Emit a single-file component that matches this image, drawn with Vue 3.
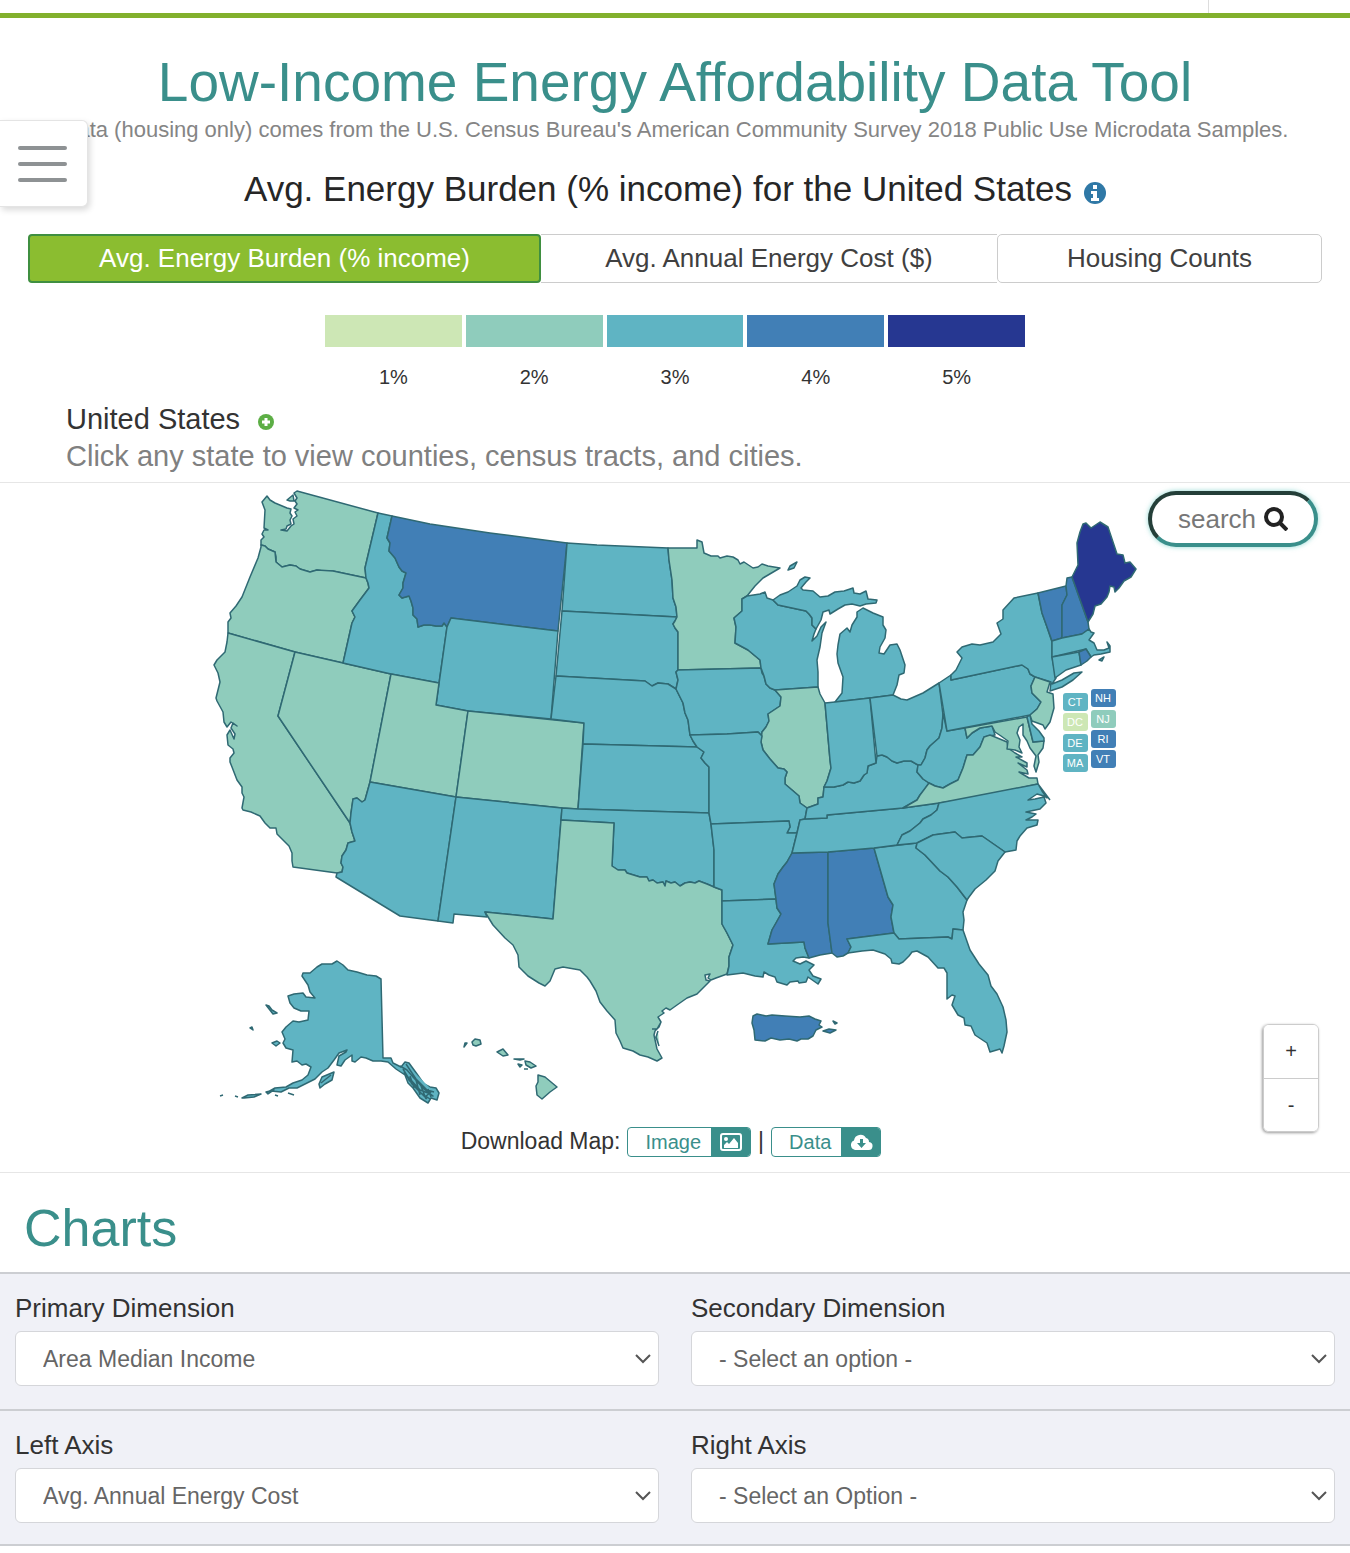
<template>
  <div class="page">
    <header class="topbar">
      <div class="topbar-cell"></div>
    </header>

    <button class="menu-toggle" type="button" aria-label="Open menu">
      <span></span>
      <span></span>
      <span></span>
    </button>

    <main>
      <h1 class="title">Low-Income Energy Affordability Data Tool</h1>
      <p class="source">
        Data (housing only) comes from the U.S. Census Bureau's American Community Survey 2018 Public Use Microdata Samples.
      </p>

      <h2 class="subtitle">
        <span>Avg. Energy Burden (% income) for the United States</span>
        <svg class="info" viewBox="0 0 22 22" aria-hidden="true">
          <circle cx="11" cy="11" r="11" fill="#2f78a6" />
          <path d="M9 3h4v4H9zM7 9h6v7h2v3H7v-3h2v-4H7z" fill="#fff" />
        </svg>
      </h2>

      <div class="tabs">
        <button
          v-for="tab in tabs"
          :key="tab"
          type="button"
          class="tab"
          :class="{ active: tab === activeTab }"
          @click="activeTab = tab"
        >{{ tab }}</button>
      </div>

      <ul class="legend">
        <li v-for="n in 5" :key="n">
          <span class="swatch" :class="'bg' + n"></span>
          {{ n }}%
        </li>
      </ul>

      <div class="place">
        <div class="place-name">
          <span>United States</span>
          <svg class="plus" viewBox="0 0 16 16" aria-hidden="true">
            <circle cx="8" cy="8" r="8" fill="#5cae45" />
            <path d="M8 4v8M4 8h8" stroke="#fff" stroke-width="3" />
          </svg>
        </div>
        <div class="hint">Click any state to view counties, census tracts, and cities.</div>
      </div>

      <section class="map-area">
        <svg class="map" viewBox="0 483 1350 634" role="img" aria-label="Map of the United States">
          <path
            v-for="s in states"
            :key="s.id"
            class="state"
            :class="'lv' + s.level"
            :d="s.d"
          />
          <g v-for="c in chips" :key="c.id">
            <rect :class="'lv' + c.level" :x="c.x" :y="c.y" width="25" height="18" rx="3" />
            <text class="chip-text" :x="c.x + 12" :y="c.y + 13">{{ c.id }}</text>
          </g>
        </svg>

        <button class="search" type="button">
          <span>search</span>
          <svg viewBox="0 0 24 24" aria-hidden="true">
            <circle cx="10" cy="10" r="8" />
            <path d="M16 16l7 7" />
          </svg>
        </button>

        <div class="zoom">
          <button type="button">+</button>
          <button type="button">-</button>
        </div>

        <div class="download">
          <span>Download Map:</span>
          <button class="dl" type="button">
            <span class="dl-label">Image</span>
            <span class="dl-icon">
              <svg viewBox="0 0 24 20" aria-hidden="true">
                <rect x="2" y="2" width="20" height="16" rx="2" fill="none" stroke="#fff" stroke-width="2" />
                <circle cx="7" cy="7" r="2" fill="#fff" />
                <path d="M5 16v-3l3-3 2 2 5-6 4 5v5z" fill="#fff" />
              </svg>
            </span>
          </button>
          <span class="bar">|</span>
          <button class="dl" type="button">
            <span class="dl-label">Data</span>
            <span class="dl-icon">
              <svg viewBox="0 0 24 20" aria-hidden="true">
                <path d="M6 18a5 5 0 0 1-1-9.500A6.500 6.500 0 0 1 17 6a4 4 0 0 1 3 4 4 4 0 0 1-1 8z" fill="#fff" />
                <path d="M11 7h3v4h3l-4.500 5L8 11h3z" fill="#3a8f8b" />
              </svg>
            </span>
          </button>
        </div>
      </section>

      <h2 class="charts-title">Charts</h2>

      <form class="controls">
        <div v-for="(row, i) in rows" :key="i" class="row">
          <div v-for="f in row" :key="f.id" class="field">
            <label :for="f.id">{{ f.label }}</label>
            <div class="select-wrap">
              <select :id="f.id">
                <option>{{ f.value }}</option>
              </select>
              <svg viewBox="0 0 16 10" aria-hidden="true">
                <path d="M1 1l7 7 7-7" />
              </svg>
            </div>
          </div>
        </div>
      </form>
    </main>
  </div>
</template>

<script setup>
import { ref } from 'vue'

const tabs = ['Avg. Energy Burden (% income)', 'Avg. Annual Energy Cost ($)', 'Housing Counts']
const activeTab = ref(tabs[0])

const rows = [
  [
    { id: 'primary', label: 'Primary Dimension', value: 'Area Median Income' },
    { id: 'secondary', label: 'Secondary Dimension', value: '- Select an option -' }
  ],
  [
    { id: 'left', label: 'Left Axis', value: 'Avg. Annual Energy Cost' },
    { id: 'right', label: 'Right Axis', value: '- Select an Option -' }
  ]
]

const chips = [
  { id: 'CT', level: 3, x: 1063, y: 693 },
  { id: 'DC', level: 1, x: 1063, y: 713 },
  { id: 'DE', level: 3, x: 1063, y: 734 },
  { id: 'MA', level: 3, x: 1063, y: 754 },
  { id: 'NH', level: 4, x: 1091, y: 689 },
  { id: 'NJ', level: 2, x: 1091, y: 710 },
  { id: 'RI', level: 4, x: 1091, y: 730 },
  { id: 'VT', level: 4, x: 1091, y: 750 }
]

const states = [
  { id: 'WA', level: 2, d: 'M297 491L378 513 365 568 366 578 333 571 323 571 317 570 310 572 300 569 296 566 290 565 282 567 276 562 276 557 275 552 268 549 265 546 261 545 261 540 264 537 262 534 264 530 268 530 264 528 265 510 262 502 267 496 270 500 275 503 287 508 291 509 290 513 292 516 290 520 291 524 287 526 286 529 281 530 287 531 291 526 294 524 293 519 297 516 295 512 298 510 294 508 297 504 295 501 297 498 294 493ZM287 500L293 495 294 501 290 501Z' },
  { id: 'OR', level: 2, d: 'M261 545L265 546 268 549 275 552 276 562 282 567 290 565 296 566 300 569 310 572 317 570 333 571 366 578 368 583 369 588 360 600 352 611 355 617 352 623 343 663 295 652 228 633 228 622 231 618 230 613 236 606 242 597 250 577 258 558 261 547Z' },
  { id: 'CA', level: 2, d: 'M228 633L295 652 278 716 350 823 352 832 355 841 348 843 346 850 342 856 341 863 343 867 342 872 337 873 293 867 292 861 292 853 289 846 281 838 277 834 276 828 270 828 265 823 260 816 251 812 243 810 242 808 244 797 242 793 242 787 237 780 232 767 230 762 230 758 234 753 233 749 228 745 227 735 230 730 234 739 235 734 231 728 233 723 237 726 231 722 227 727 224 722 223 712 217 701 216 698 220 682 218 673 214 665 217 660 225 652 227 642Z' },
  { id: 'NV', level: 2, d: 'M295 652L343 663 391 674 370 782 365 800 362 802 357 798 353 799 351 813 350 823 278 716Z' },
  { id: 'ID', level: 3, d: 'M378 513L392 516 387 538 390 543 389 551 395 558 399 567 402 571 406 573 403 583 403 588 399 595 402 598 409 596 411 601 413 608 413 615 417 619 418 627 424 625 430 625 436 626 442 626 444 623 447 627 439 683 391 674 343 663 352 623 355 617 352 611 360 600 369 588 368 583 366 578 365 568Z' },
  { id: 'MT', level: 4, d: 'M392 516L430 524 490 533 567 543 558 631 451 618 447 627 444 623 442 626 436 626 430 625 424 625 418 627 417 619 413 615 413 608 411 601 409 596 402 598 399 595 403 588 403 583 406 573 402 571 399 567 395 558 389 551 390 543 387 538Z' },
  { id: 'WY', level: 3, d: 'M451 618L558 631 551 719 468 711 436 705 447 627Z' },
  { id: 'UT', level: 2, d: 'M391 674L439 683 436 705 468 711 456 797 370 782Z' },
  { id: 'CO', level: 2, d: 'M468 711L584 723 578 809 562 808 456 797Z' },
  { id: 'AZ', level: 3, d: 'M370 782L456 797 438 921 400 916 336 877 337 873 342 872 343 867 341 863 342 856 346 850 348 843 355 841 352 832 350 823 351 813 353 799 357 798 362 802 365 800Z' },
  { id: 'NM', level: 3, d: 'M456 797L562 808 553 919 485 912 487 917 454 914 453 923 438 921Z' },
  { id: 'ND', level: 3, d: 'M567 543L597 545 668 548 669 560 672 580 673 598 676 607 677 617 562 611Z' },
  { id: 'SD', level: 3, d: 'M562 611L677 617 675 621 673 624 675 628 678 632 678 670 676 672 678 680 676 689 668 684 658 683 652 686 645 681 556 676Z' },
  { id: 'NE', level: 3, d: 'M556 676L645 681 652 686 658 683 668 684 676 689 680 697 683 703 685 713 688 720 690 735 693 741 697 747 583 744 584 723 551 719Z' },
  { id: 'KS', level: 3, d: 'M583 744L697 747 704 752 701 758 705 763 709 767 709 813 578 809Z' },
  { id: 'OK', level: 3, d: 'M562 808L578 809 709 813 711 824 714 850 714 887 707 884 699 881 695 883 690 882 685 883 680 886 675 882 671 883 666 881 665 886 663 882 657 883 653 880 649 881 647 877 640 877 627 873 625 870 618 870 612 866 614 823 561 820Z' },
  { id: 'TX', level: 2, d: 'M561 820L614 823 612 866 618 870 625 870 627 873 640 877 647 877 649 881 653 880 657 883 663 882 665 886 666 881 671 883 675 882 680 886 685 883 690 882 695 883 699 881 707 884 714 887 722 890 722 924 727 933 730 939 733 945 729 957 729 966 727 974 716 978 711 980 708 978 710 974 705 975 706 980 710 981 705 986 697 994 687 998 677 1005 670 1010 666 1008 662 1011 664 1013 658 1017 661 1022 659 1027 655 1031 654 1035 657 1049 662 1058 657 1061 648 1057 640 1055 633 1051 623 1048 620 1041 616 1033 615 1020 607 1011 600 1002 596 991 590 981 587 977 580 970 563 967 555 969 550 981 545 986 539 983 528 976 519 967 518 955 513 945 505 938 493 925 485 912 553 919ZM661 1022L657 1029 652 1029M658 1031L656 1037 659 1046' },
  { id: 'MN', level: 2, d: 'M668 548L697 548 697 540 702 542 704 553 711 556 718 556 720 558 727 556 733 557 738 560 740 564 744 562 753 568 758 567 762 564 768 566 780 568 763 578 755 586 747 596 742 599 742 611 734 618 736 627 735 643 748 650 760 660 761 668 678 670 678 632 675 628 673 624 675 621 677 617 676 607 673 598 672 580 669 560Z' },
  { id: 'IA', level: 3, d: 'M678 670L761 668 762 673 764 676 766 684 770 688 775 690 781 697 780 706 768 714 769 721 766 727 762 732 762 736 758 732 727 734 690 735 688 720 685 713 683 703 680 697 676 689 678 680 676 672Z' },
  { id: 'WI', level: 3, d: 'M742 599L747 596 760 594 765 592 767 598 773 600 778 605 792 608 806 611 809 614 812 618 812 625 816 629 814 634 812 641 817 636 821 627 826 622 822 633 820 647 817 660 818 672 818 687 775 690 770 688 766 684 764 676 761 668 760 660 748 650 735 643 736 627 734 618 742 611Z' },
  { id: 'MI', level: 3, d: 'M773 600L780 595 788 592 797 586 800 580 805 577 810 578 806 582 801 588 803 590 813 591 820 597 828 596 835 592 844 591 853 588 854 593 860 594 866 591 868 599 877 600 876 603 866 604 860 606 852 604 845 605 838 609 830 614 829 610 823 612 821 620 816 629 812 625 812 618 809 614 806 611 792 608 778 605ZM857 612L857 617 852 625 850 632 847 628 840 634 838 645 837 654 838 663 843 677 842 693 835 702 870 698 893 695 897 685 899 675 904 673 905 665 900 650 897 644 890 645 884 654 879 653 880 647 885 638 886 630 883 625 883 617 873 613 863 608ZM788 570L790 566 797 562 794 568Z' },
  { id: 'IL', level: 2, d: 'M775 690L818 687 820 694 825 703 830 760 831 768 827 781 824 787 823 797 818 798 818 804 807 808 800 803 799 796 785 784 785 778 787 772 784 769 778 768 770 759 763 750 761 742 762 732 766 727 769 721 768 714 780 706 781 697Z' },
  { id: 'MO', level: 3, d: 'M690 735L727 734 758 732 762 736 761 742 763 750 770 759 778 768 784 769 787 772 785 778 785 784 799 796 800 803 807 808 805 819 800 820 797 833 787 833 790 827 789 821 711 824 709 813 709 767 705 763 701 758 704 752 697 747 693 741Z' },
  { id: 'AR', level: 3, d: 'M711 824L789 821 790 827 787 833 797 833 792 853 787 862 783 867 778 874 774 884 776 899 722 901 722 890 714 887 714 850Z' },
  { id: 'LA', level: 3, d: 'M722 901L776 899 777 908 781 914 776 923 772 930 768 944 804 942 805 948 809 958 803 957 796 958 793 961 800 964 806 961 814 965 809 970 813 976 821 979 818 984 808 977 806 982 799 983 798 981 790 982 787 985 777 982 775 977 769 975 764 972 763 977 755 976 743 973 727 975 729 966 729 957 733 945 730 939 727 933 722 924Z' },
  { id: 'MS', level: 4, d: 'M792 853L828 852 828 923 832 953 820 955 809 958 805 948 804 942 768 944 772 930 776 923 781 914 777 908 776 899 774 884 778 874 783 867 787 862Z' },
  { id: 'AL', level: 4, d: 'M828 852L874 848 888 897 893 905 891 917 894 933 847 939 851 947 848 953 843 956 837 957 832 953 828 923Z' },
  { id: 'GA', level: 3, d: 'M874 848L917 843 916 848 925 855 940 871 948 877 957 887 967 900 963 912 964 920 963 930 953 929 952 939 948 937 899 939 894 933 891 917 893 905 888 897Z' },
  { id: 'FL', level: 3, d: 'M847 939L894 933 899 939 948 937 952 939 953 929 963 930 970 950 979 964 988 975 991 986 997 994 1003 1007 1006 1020 1007 1032 1004 1046 1002 1053 1000 1049 990 1052 987 1043 975 1035 971 1026 965 1025 964 1018 958 1015 952 1005 955 996 952 995 947 999 947 973 944 968 938 968 928 957 917 951 912 952 909 956 903 962 899 964 892 963 891 959 885 954 873 950 862 951 848 953 851 947Z' },
  { id: 'TN', level: 3, d: 'M805 819L827 818 827 815 903 808 939 803 937 810 931 815 923 819 920 823 910 831 902 835 900 839 897 845 874 848 828 852 792 853 797 833 800 820Z' },
  { id: 'KY', level: 3, d: 'M807 808L818 804 818 798 823 797 824 787 834 787 843 785 848 782 854 783 860 781 864 775 867 773 868 766 876 763 877 756 882 755 887 757 892 761 897 763 904 761 911 761 918 765 917 772 923 779 929 783 925 789 920 795 917 800 903 808 827 815 827 818 805 819Z' },
  { id: 'IN', level: 3, d: 'M825 703L835 702 870 698 876 763 868 766 867 773 864 775 860 781 854 783 848 782 843 785 834 787 824 787 827 781 831 768 830 760Z' },
  { id: 'OH', level: 3, d: 'M870 698L893 695 901 699 907 700 923 693 939 683 943 715 942 728 939 738 930 746 927 750 925 758 921 765 918 765 911 761 904 761 897 763 892 761 887 757 882 755 877 756Z' },
  { id: 'WV', level: 3, d: 'M943 713L947 731 965 728 967 738 972 733 980 728 992 726 995 735 984 737 980 747 973 755 967 755 963 768 958 780 950 784 943 788 935 786 929 783 923 779 917 772 918 765 921 765 925 758 927 750 930 746 939 738 942 728Z' },
  { id: 'VA', level: 2, d: 'M903 808L917 800 920 795 929 783 935 786 943 788 950 784 958 780 963 768 967 755 973 755 980 747 984 737 990 735 995 737 1007 742 1008 748 1015 753 1022 757 1016 757 1027 763 1027 767 1018 763 1027 770 1028 774 1019 772 1029 778 1037 778 1038 784 967 799 939 803Z' },
  { id: 'MD', level: 2, d: 'M965 728L1027 717 1033 742 1044 741 1043 748 1038 755 1039 762 1036 772 1034 766 1036 756 1030 748 1027 741 1023 735 1023 724 1019 727 1017 733 1020 740 1019 747 1022 753 1015 750 1007 749 1008 741 1001 736 995 732 992 726 980 728 972 733 967 738Z' },
  { id: 'DE', level: 3, d: 'M1027 717L1030 715 1032 724 1039 731 1044 738 1044 741 1033 742Z' },
  { id: 'NC', level: 3, d: 'M939 803L1038 784 1042 791 1047 798 1044 796 1037 794 1028 800 1035 799 1044 797 1046 803 1040 809 1026 812 1036 814 1032 817 1026 820 1038 820 1037 825 1027 828 1020 836 1017 841 1016 850 1005 852 982 836 962 838 955 832 933 835 917 843 897 845 900 839 902 835 910 831 920 823 923 819 931 815 937 810ZM1038 784L1050 800' },
  { id: 'SC', level: 3, d: 'M917 843L933 835 955 832 962 838 982 836 1005 852 998 861 995 871 986 880 975 889 969 897 967 900 957 887 948 877 940 871 925 855 916 848Z' },
  { id: 'PA', level: 3, d: 'M939 683L951 675 951 680 1022 665 1028 669 1030 674 1035 677 1031 686 1032 693 1041 702 1037 709 1030 715 947 731Z' },
  { id: 'NY', level: 3, d: 'M951 680L951 675 956 670 962 658 957 652 962 647 972 644 980 645 993 642 1001 634 997 623 1003 619 1003 610 1014 598 1038 593 1042 613 1047 627 1052 642 1052 657 1056 678 1052 684 1062 680 1074 673 1082 672 1073 680 1062 687 1050 691 1051 682 1035 677 1030 674 1028 669 1022 665Z' },
  { id: 'NJ', level: 2, d: 'M1035 677L1050 682 1047 692 1053 694 1054 708 1050 722 1045 729 1043 725 1032 721 1030 715 1037 709 1041 702 1032 693 1031 686Z' },
  { id: 'VT', level: 4, d: 'M1038 593L1066 586 1067 595 1062 605 1062 638 1052 641 1047 627 1042 613Z' },
  { id: 'NH', level: 4, d: 'M1066 586L1067 578 1072 577 1088 622 1089 629 1082 634 1062 638 1062 605 1067 595Z' },
  { id: 'ME', level: 5, d: 'M1072 577L1078 565 1077 543 1080 532 1083 524 1086 523 1091 528 1100 522 1108 527 1117 554 1123 555 1125 563 1130 562 1136 569 1131 577 1124 581 1119 588 1115 592 1114 587 1110 586 1109 592 1107 597 1101 604 1095 606 1093 614 1088 622Z' },
  { id: 'MA', level: 3, d: 'M1052 641L1062 638 1082 634 1089 629 1091 632 1094 633 1089 640 1094 643 1097 650 1104 650 1109 648 1107 642 1110 646 1110 652 1101 654 1094 655 1091 657 1086 649 1052 657ZM1099 660L1104 657 1102 661Z' },
  { id: 'CT', level: 3, d: 'M1052 657L1079 652 1081 665 1066 670 1055 678Z' },
  { id: 'RI', level: 4, d: 'M1079 652L1086 649 1091 657 1087 661 1081 665Z' },
  { id: 'PR', level: 4, d: 'M753 1016L757 1014 766 1016 772 1015 785 1016 800 1017 809 1016 815 1019 821 1021 819 1025 822 1027 816 1030 813 1036 808 1039 801 1039 797 1041 789 1039 780 1040 771 1038 765 1041 755 1040 754 1030 752 1023ZM823 1031L829 1029 836 1030 830 1033ZM833 1021L837 1023 835 1024Z' },
  { id: 'AK', level: 3, d: 'M337 961L343 965 348 970 357 972 367 975 376 976 381 979 383 1058 391 1058 393 1063 401 1067 405 1062 409 1063 417 1074 424 1084 430 1087 436 1088 439 1093 437 1100 431 1098 428 1103 420 1098 413 1088 408 1083 405 1075 396 1069 388 1062 381 1061 373 1061 366 1058 361 1057 355 1062 352 1061 352 1055 345 1060 341 1066 337 1065 339 1056 346 1052 347 1050 339 1053 334 1060 328 1068 322 1072 315 1079 307 1083 297 1088 289 1088 281 1092 271 1091 268 1092 275 1088 286 1087 293 1083 302 1080 308 1075 311 1067 306 1064 302 1065 297 1061 292 1062 293 1050 286 1048 283 1043 285 1039 282 1032 286 1027 293 1021 299 1022 308 1020 309 1011 301 1011 294 1008 290 1003 288 996 294 994 303 993 306 997 315 998 310 992 308 985 302 976 303 973 310 973 317 967 322 964 332 964ZM319 1084L322 1077 334 1072 332 1080 325 1084 320 1088ZM321 1083L331 1075M272 1043L277 1041 280 1043 276 1046ZM266 1005L269 1006 272 1010 277 1013 273 1014ZM250 1028L252 1027 253 1030ZM242 1098L248 1095 261 1094 254 1097 244 1098ZM266 1092L274 1090 268 1094ZM235 1096L238 1097M220 1096L223 1095M275 1095L278 1096M288 1093L294 1095' },
  { id: 'AK-islands', level: 3, d: 'M400 1066L407 1070 413 1077 424 1089 433 1096 428 1093 420 1090 411 1080 404 1073 415 1087 422 1094 427 1099M406 1064L416 1079 427 1090 434 1092M403 1069L412 1084 425 1097 432 1091M410 1076L414 1088M416 1080L420 1095M421 1086L426 1099M428 1089L431 1097M408 1079L421 1093 430 1099' },
  { id: 'HI', level: 2, d: 'M464 1047L467 1043 465 1043ZM472 1042L475 1039 480 1040 481 1044 476 1046 473 1045ZM497 1052L503 1049 508 1055 503 1056ZM514 1059L524 1059 520 1060ZM518 1064L522 1065 520 1067ZM525 1061L530 1062 536 1066 531 1068 526 1065ZM524 1069L528 1069M538 1075L545 1077 551 1082 557 1087 550 1092 542 1099 537 1095 536 1086 538 1082Z' }
]
</script>

<style>
body {
  margin: 0;
  background: #fff;
}
</style>

<style scoped>
.page {
  position: relative;
  font-family: "Liberation Sans", Arial, sans-serif;
  color: #333;
}

.page * {
  box-sizing: border-box;
}

button,
select {
  font-family: inherit;
  cursor: pointer;
}

.topbar {
  height: 18px;
  border-bottom: 5px solid #82b02d;
  display: flex;
  justify-content: flex-end;
}

.topbar-cell {
  width: 142px;
  border-left: 1px solid #ddd;
}

.menu-toggle {
  position: absolute;
  top: 120px;
  left: 0;
  width: 88px;
  height: 87px;
  padding: 0 20px 0 18px;
  display: flex;
  flex-direction: column;
  justify-content: center;
  gap: 12px;
  background: #fff;
  border: 1px solid #e4e4e4;
  border-left: 0;
  border-radius: 0 6px 6px 0;
  box-shadow: 2px 3px 6px rgba(0, 0, 0, 0.15);
}

.menu-toggle span {
  height: 4px;
  border-radius: 2px;
  background: #8e9294;
}

.title {
  margin: 32px 0 0;
  font-size: 55px;
  line-height: 64px;
  font-weight: 400;
  text-align: center;
  color: #3a8f8b;
}

.source {
  margin: 0;
  font-size: 22px;
  line-height: 32px;
  text-align: center;
  color: #858585;
}

.subtitle {
  margin: 21px 0 0;
  display: flex;
  justify-content: center;
  align-items: center;
  gap: 12px;
  font-size: 35px;
  line-height: 44px;
  font-weight: 400;
  color: #262626;
}

.info {
  width: 22px;
  height: 22px;
  margin-top: 8px;
}

.tabs {
  display: flex;
  margin: 23px 28px 0;
}

.tab {
  flex: 14 1 auto;
  height: 49px;
  padding: 0;
  font-size: 26px;
  color: #404040;
  background: #fff;
  border: 1px solid #ccc;
  border-left-width: 0;
}

.tab:nth-child(2) {
  flex-grow: 13;
  border-right-width: 0;
}

.tab:last-child {
  border-left-width: 1px;
  border-radius: 5px;
}

.tab.active {
  color: #fff;
  background: #8bbd30;
  border: 2px solid #3f8f40;
  border-radius: 4px;
}

.legend {
  list-style: none;
  width: 700px;
  max-width: 100%;
  margin: 32px auto 0;
  padding: 0;
  display: flex;
  gap: 4px;
}

.legend li {
  flex: 1;
  display: flex;
  flex-direction: column;
  gap: 18px;
  font-size: 20px;
  line-height: 24px;
  text-align: center;
}

.swatch {
  height: 32px;
}

.bg1 { background: #cde7b5; }
.bg2 { background: #8fccbc; }
.bg3 { background: #5fb4c3; }
.bg4 { background: #417fb6; }
.bg5 { background: #263791; }

.place {
  padding: 12px 66px 7px;
  font-size: 29px;
  line-height: 37px;
  border-bottom: 1px solid #e6e6e6;
}

.place-name {
  display: flex;
  align-items: center;
  gap: 18px;
}

.plus {
  width: 16px;
  height: 16px;
  margin-top: 4px;
}

.hint {
  color: #808080;
}

.map-area {
  position: relative;
  border-bottom: 1px solid #e6e6e6;
}

.map {
  display: block;
  width: 100%;
  height: auto;
}

.state {
  stroke: #2f6973;
  stroke-width: 1.5;
  stroke-linejoin: round;
}

.lv1 { fill: #cde7b5; }
.lv2 { fill: #8fccbc; }
.lv3 { fill: #5fb4c3; }
.lv4 { fill: #417fb6; }
.lv5 { fill: #263791; }

.chip-text {
  font-size: 11px;
  text-anchor: middle;
  fill: #fff;
}

.search {
  position: absolute;
  top: 8px;
  right: 32px;
  width: 170px;
  height: 56px;
  padding: 0;
  display: flex;
  align-items: center;
  justify-content: center;
  gap: 8px;
  font-size: 26px;
  color: #777;
  background: #fff;
  border: 4px solid #3a8f8b;
  border-top-color: #243f39;
  border-left-color: #243f39;
  border-radius: 28px;
  box-shadow: 0 0 5px rgba(70, 190, 180, 0.6);
}

.search svg {
  width: 24px;
  height: 24px;
  fill: none;
  stroke: #222;
  stroke-width: 4;
}

.zoom {
  position: absolute;
  right: 31px;
  bottom: 40px;
  width: 56px;
  border: 1px solid #ccc;
  border-radius: 6px;
  box-shadow: -1px 1px 3px rgba(0, 0, 0, 0.4);
  overflow: hidden;
}

.zoom button {
  display: block;
  width: 100%;
  height: 53px;
  padding: 0;
  font-size: 20px;
  color: #333;
  background: #fff;
  border: 0;
}

.zoom button + button {
  border-top: 1px solid #ccc;
}

.download {
  height: 55px;
  padding: 0 8px 6px 0;
  display: flex;
  align-items: center;
  justify-content: center;
  gap: 7px;
  font-size: 23px;
}

.dl {
  height: 30px;
  padding: 0;
  display: flex;
  font-size: 20px;
  color: #3a8f8b;
  background: #fff;
  border: 1px solid #3a8f8b;
  border-radius: 4px;
  overflow: hidden;
}

.dl-label {
  padding: 0 10px 0 17px;
  line-height: 28px;
}

.dl-icon {
  width: 39px;
  display: flex;
  align-items: center;
  justify-content: center;
  background: #3a8f8b;
}

.dl-icon svg {
  width: 24px;
  height: 20px;
}

.charts-title {
  margin: 23px 24px 12px;
  font-size: 52px;
  line-height: 64px;
  font-weight: 400;
  color: #3a8f8b;
}

.controls {
  border-top: 2px solid #ccced2;
  margin-bottom: 6px;
}

.row {
  display: grid;
  grid-template-columns: 1fr 1fr;
  gap: 32px;
  padding: 17px 15px 23px;
  background: #f0f1f7;
  border-bottom: 2px solid #ccced2;
}

.row:last-child {
  padding-bottom: 21px;
}

.field label {
  display: block;
  margin-bottom: 6px;
  font-size: 26px;
  line-height: 34px;
}

.select-wrap {
  display: grid;
  align-items: center;
}

.select-wrap > * {
  grid-area: 1 / 1;
}

.select-wrap select {
  width: 100%;
  height: 55px;
  padding: 0 27px;
  font-size: 23px;
  color: #666;
  appearance: none;
  background: #fff;
  border: 1px solid #d5d6da;
  border-radius: 6px;
}

.select-wrap svg {
  justify-self: end;
  width: 16px;
  height: 10px;
  margin-right: 8px;
  fill: none;
  stroke: #555;
  stroke-width: 2;
  pointer-events: none;
}
</style>
